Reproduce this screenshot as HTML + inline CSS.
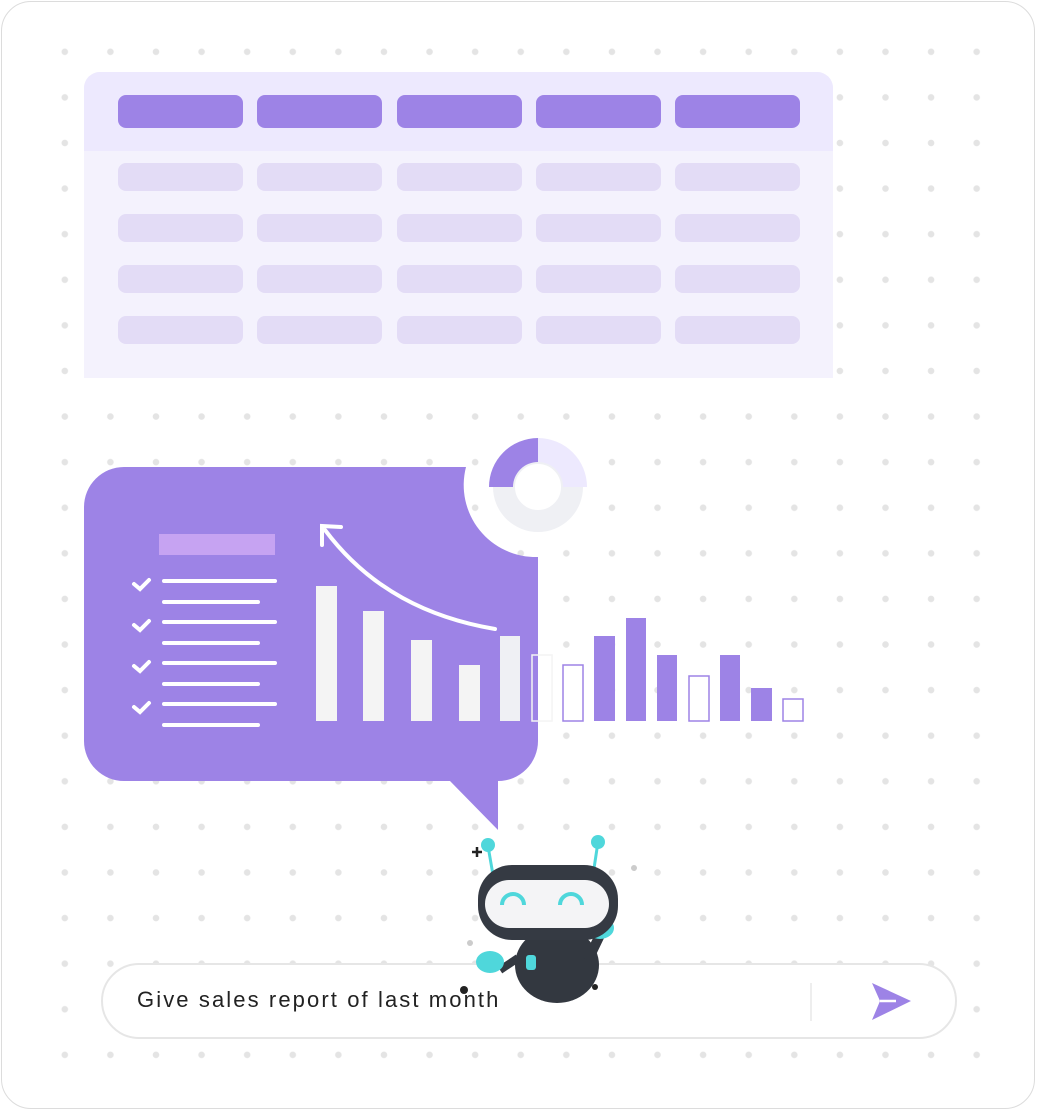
<!DOCTYPE html>
<html><head><style>
body{margin:0;width:1038px;height:1112px;background:#fff;font-family:"Liberation Sans",sans-serif;position:relative;overflow:hidden}
.frame{position:absolute;left:1px;top:1px;width:1034px;height:1108px;border:1px solid #dcdcdc;border-radius:30px;box-sizing:border-box}
.dots{position:absolute;left:42px;top:29px;width:956px;height:1046px;background-image:radial-gradient(circle,#e4e4e4 3px,transparent 3.5px);background-size:45.6px 45.6px;background-position:0 0}
.abs{position:absolute}
</style></head><body>
<div class="frame"></div>
<div class="dots"></div>
<div class="abs" style="left:84px;top:72px;width:749px;height:306px;background:#f4f2fd;border-radius:16px 16px 0 0"></div>
<div class="abs" style="left:84px;top:72px;width:749px;height:79px;background:#ede9fe;border-radius:16px 16px 0 0"></div>
<svg class="abs" style="left:0;top:0" width="1038" height="1112">
<g fill="#9d83e6">
<rect x="118" y="95" width="125" height="33" rx="8"/><rect x="257" y="95" width="125" height="33" rx="8"/><rect x="397" y="95" width="125" height="33" rx="8"/><rect x="536" y="95" width="125" height="33" rx="8"/><rect x="675" y="95" width="125" height="33" rx="8"/>
</g>
<g fill="#e3dcf6">
<rect x="118" y="163" width="125" height="28" rx="8"/><rect x="257" y="163" width="125" height="28" rx="8"/><rect x="397" y="163" width="125" height="28" rx="8"/><rect x="536" y="163" width="125" height="28" rx="8"/><rect x="675" y="163" width="125" height="28" rx="8"/>
<rect x="118" y="214" width="125" height="28" rx="8"/><rect x="257" y="214" width="125" height="28" rx="8"/><rect x="397" y="214" width="125" height="28" rx="8"/><rect x="536" y="214" width="125" height="28" rx="8"/><rect x="675" y="214" width="125" height="28" rx="8"/>
<rect x="118" y="265" width="125" height="28" rx="8"/><rect x="257" y="265" width="125" height="28" rx="8"/><rect x="397" y="265" width="125" height="28" rx="8"/><rect x="536" y="265" width="125" height="28" rx="8"/><rect x="675" y="265" width="125" height="28" rx="8"/>
<rect x="118" y="316" width="125" height="28" rx="8"/><rect x="257" y="316" width="125" height="28" rx="8"/><rect x="397" y="316" width="125" height="28" rx="8"/><rect x="536" y="316" width="125" height="28" rx="8"/><rect x="675" y="316" width="125" height="28" rx="8"/>
</g>
<path fill="#9d83e6" d="M124 467 H466 A72 72 0 0 0 538 557 V741 A40 40 0 0 1 498 781 V830 L450 781 H124 A40 40 0 0 1 84 741 V507 A40 40 0 0 1 124 467Z"/>
<circle cx="538" cy="487" r="34" fill="none" stroke="#eff0f4" stroke-width="22"/>
<path d="M538 438 A49 49 0 0 1 587 487 H563 A25 25 0 0 0 538 462Z" fill="#ede9fe"/>
<path d="M538 438 A49 49 0 0 0 489 487 H513 A25 25 0 0 1 538 462Z" fill="#9d83e6"/>
<rect x="159" y="534" width="116" height="21" fill="#c6a3f2"/>
<g stroke="#fff" stroke-width="4" stroke-linecap="round" fill="none">
<path d="M134 584l6 5 9-9M134 625l6 5 9-9M134 666l6 5 9-9M134 707l6 5 9-9"/>
<path d="M164 581H275M164 602H258M164 622H275M164 643H258M164 663H275M164 684H258M164 704H275M164 725H258"/>
<path d="M495 629C430 618 370 590 325 530"/><path d="M322 545L322 526 341 527"/>
</g>
<g fill="#f4f4f4"><rect x="316" y="586" width="21" height="135"/><rect x="363" y="611" width="21" height="110"/><rect x="411" y="640" width="21" height="81"/><rect x="459" y="665" width="21" height="56"/><rect x="500" y="636" width="20" height="85" fill="#eff0f4"/></g>
<rect x="532" y="655" width="20" height="66" fill="none" stroke="#f4f4f4" stroke-width="1.5"/>
<g fill="#9d83e6"><rect x="594" y="636" width="21" height="85"/><rect x="626" y="618" width="20" height="103"/><rect x="657" y="655" width="20" height="66"/><rect x="720" y="655" width="20" height="66"/><rect x="751" y="688" width="21" height="33"/></g>
<g fill="#fff" stroke="#9d83e6" stroke-width="1.5"><rect x="563" y="665" width="20" height="56"/><rect x="689" y="676" width="20" height="45"/><rect x="783" y="699" width="20" height="22"/></g>
</svg>
<div class="abs" style="left:101px;top:963px;width:856px;height:76px;border:2px solid #e6e6e6;border-radius:38px;box-sizing:border-box;background:#fff"></div>
<div class="abs" style="left:137px;top:987px;font-size:22px;letter-spacing:2.1px;color:#222">Give sales report of last month</div>
<div class="abs" style="left:810px;top:983px;width:2px;height:38px;background:#eee"></div>
<svg class="abs" style="left:868px;top:981px" width="46" height="42"><path d="M4 2L43 20 4 39 12 20Z" fill="#9d83e6"/><path d="M12 20H28" stroke="#fff" stroke-width="2.5"/></svg>
<svg class="abs" style="left:460px;top:830px" width="200" height="180">
<path d="M12 22h10M17 17v10" stroke="#222" stroke-width="2.5"/>
<line x1="28" y1="16" x2="33" y2="45" stroke="#4fd7db" stroke-width="3"/>
<line x1="138" y1="12" x2="133" y2="45" stroke="#4fd7db" stroke-width="3"/>
<circle cx="28" cy="15" r="7" fill="#4fd7db"/><circle cx="138" cy="12" r="7" fill="#4fd7db"/>
<ellipse cx="97" cy="135" rx="42" ry="38" fill="#333840"/>
<path d="M140 105L128 130" stroke="#333840" stroke-width="10"/>
<path d="M40 140L58 128" stroke="#333840" stroke-width="8"/>
<ellipse cx="140" cy="98" rx="14" ry="11" fill="#4fd7db"/>
<ellipse cx="30" cy="132" rx="14" ry="11" fill="#4fd7db"/>
<rect x="66" y="125" width="10" height="15" rx="3" fill="#4fd7db"/>
<rect x="18" y="35" width="140" height="75" rx="34" fill="#353a43"/>
<rect x="25" y="50" width="124" height="48" rx="24" fill="#f4f4f6"/>
<path d="M42 75a11 11 0 0 1 22 0M100 75a11 11 0 0 1 22 0" stroke="#4fd7db" stroke-width="4" fill="none"/>
<circle cx="4" cy="160" r="4" fill="#222"/><circle cx="135" cy="157" r="3" fill="#222"/><circle cx="10" cy="113" r="3" fill="#ccc"/><circle cx="174" cy="38" r="3" fill="#ccc"/>
</svg>
</body></html>
